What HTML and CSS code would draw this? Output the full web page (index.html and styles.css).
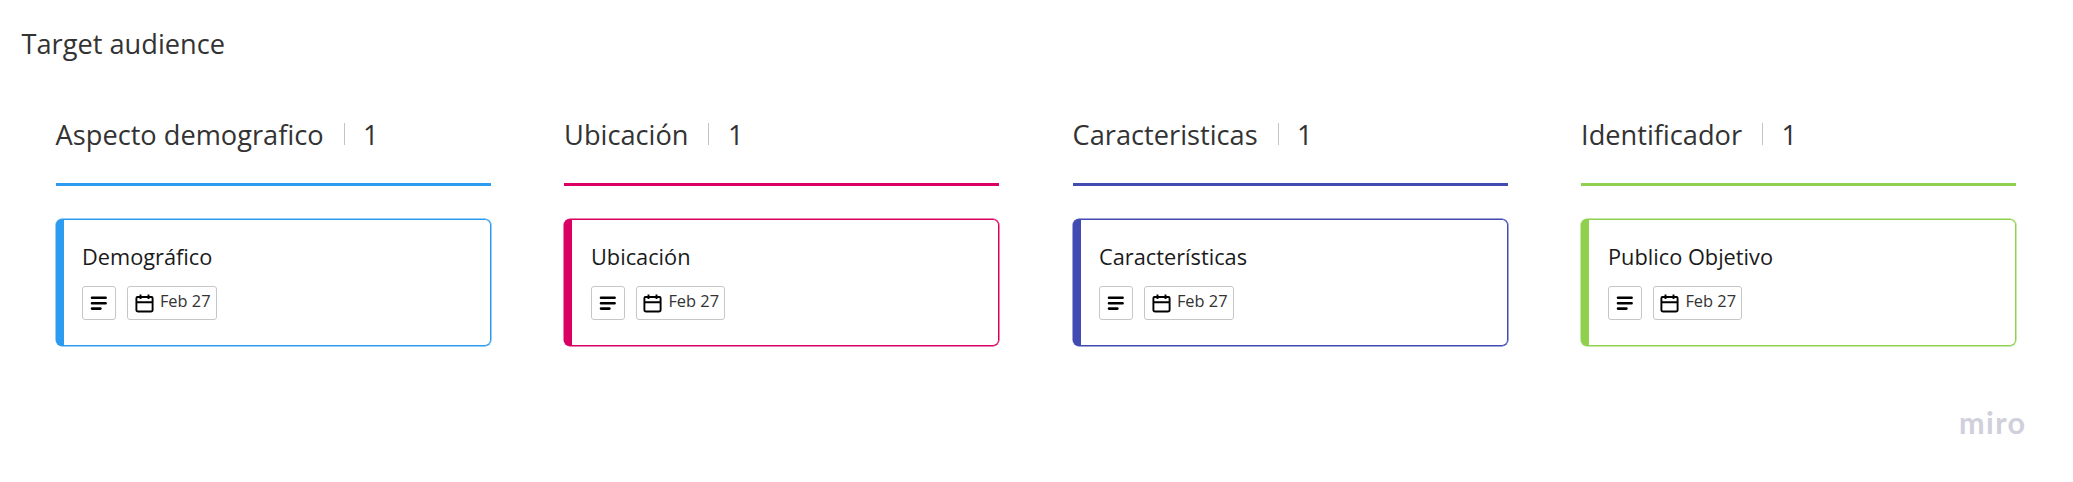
FILE: index.html
```
<!DOCTYPE html>
<html lang="es">
<head>
<meta charset="utf-8">
<title>Target audience</title>
<link rel="stylesheet" href="styles.css">
</head>
<body>
<svg class="defs" width="0" height="0" aria-hidden="true">
  <symbol id="lines" viewBox="0 0 18 14"><path d="M2 1.8H15.6M2 7.2H15.6M2 12.6H10.4" fill="none" stroke="#000" stroke-width="2.6" stroke-linecap="round"/></symbol>
  <symbol id="calendar" viewBox="0 0 19 19"><path d="M2.6 3H16.4Q17.6 3 17.6 4.2V15.7Q17.6 17.5 15.8 17.5H3.2Q1.4 17.5 1.4 15.7V4.2Q1.4 3 2.6 3ZM1.4 8.2H17.6M5.5 .4V5M13.5 .4V5" fill="none" stroke="#000" stroke-width="1.9"/></symbol>
</svg>
<main class="board">
  <h1 class="title">Target audience</h1>
  <div class="columns">
    <section class="column blue">
      <header class="head"><h2 class="name">Aspecto demografico</h2><span class="sep"></span><span class="count">1</span></header>
      <article class="card"><h3 class="label">Demográfico</h3><div class="chips"><span class="chip note"><svg class="lines"><use href="#lines"/></svg></span><span class="chip date"><svg class="cal"><use href="#calendar"/></svg><span class="day">Feb 27</span></span></div></article>
    </section>
    <section class="column pink">
      <header class="head"><h2 class="name">Ubicación</h2><span class="sep"></span><span class="count">1</span></header>
      <article class="card"><h3 class="label">Ubicación</h3><div class="chips"><span class="chip note"><svg class="lines"><use href="#lines"/></svg></span><span class="chip date"><svg class="cal"><use href="#calendar"/></svg><span class="day">Feb 27</span></span></div></article>
    </section>
    <section class="column indigo">
      <header class="head"><h2 class="name">Caracteristicas</h2><span class="sep"></span><span class="count">1</span></header>
      <article class="card"><h3 class="label">Características</h3><div class="chips"><span class="chip note"><svg class="lines"><use href="#lines"/></svg></span><span class="chip date"><svg class="cal"><use href="#calendar"/></svg><span class="day">Feb 27</span></span></div></article>
    </section>
    <section class="column green">
      <header class="head"><h2 class="name">Identificador</h2><span class="sep"></span><span class="count">1</span></header>
      <article class="card"><h3 class="label">Publico Objetivo</h3><div class="chips"><span class="chip note"><svg class="lines"><use href="#lines"/></svg></span><span class="chip date"><svg class="cal"><use href="#calendar"/></svg><span class="day">Feb 27</span></span></div></article>
    </section>
  </div>
  <footer class="brand">miro</footer>
</main>
</body>
</html>
```
FILE: styles.css
```
* { box-sizing: border-box; }
body { margin: 0; background: #fff; font-family: "Open Sans", sans-serif; color: #333; }
h1, h2, h3 { margin: 0; font-weight: 400; }
.defs { display: block; }
.board { height: 482px; padding: 26px 48px 0 21.5px; overflow: hidden; }
.title { font-size: 27.2px; line-height: 36px; }
.columns { display: grid; grid-template-columns: repeat(4, 435px); column-gap: 73.5px; padding: 54px 0 0 34.1px; }
.blue { --accent: #2d9bf0; }
.pink { --accent: #da0063; }
.indigo { --accent: #414bb2; }
.green { --accent: #8fd14f; }
.head { display: flex; align-items: flex-start; height: 70px; padding-top: 1px; border-bottom: 3px solid var(--accent); font-size: 27.2px; line-height: 36px; white-space: nowrap; }
.name { font-size: inherit; }
.sep { width: 1px; height: 22px; margin: 6px 18.5px 0 20px; background: #c4c4c4; }
.card { height: 127px; margin-top: 33px; padding: 23px 0 0 26.8px; border-radius: 6px; background: linear-gradient(var(--accent), var(--accent)) left / 8px 100% no-repeat; box-shadow: inset 0 0 0 1px var(--accent), 0 0 0 .5px var(--accent); }
.label { font-size: 22.5px; line-height: 30px; color: #1a1a1a; white-space: nowrap; transform: scaleX(.967); transform-origin: left; }
.chips { display: flex; gap: 11px; margin-top: 14px; }
.chip { display: flex; align-items: center; height: 34px; border: 1px solid #c6c6c6; border-radius: 3px; }
.note { width: 34px; justify-content: center; }
.lines { width: 18px; height: 14px; }
.date { width: 89.5px; padding-left: 6.5px; }
.cal { width: 19px; height: 19px; flex: none; }
.day { margin: -4px 0 0 6px; font-size: 16.4px; line-height: 24px; white-space: nowrap; }
.brand { margin: 59px -1.5px 0 0; text-align: right; font-family: Lato, sans-serif; font-weight: 700; font-size: 30.6px; line-height: 36px; letter-spacing: 1.4px; color: #d0cfdc; }
```
